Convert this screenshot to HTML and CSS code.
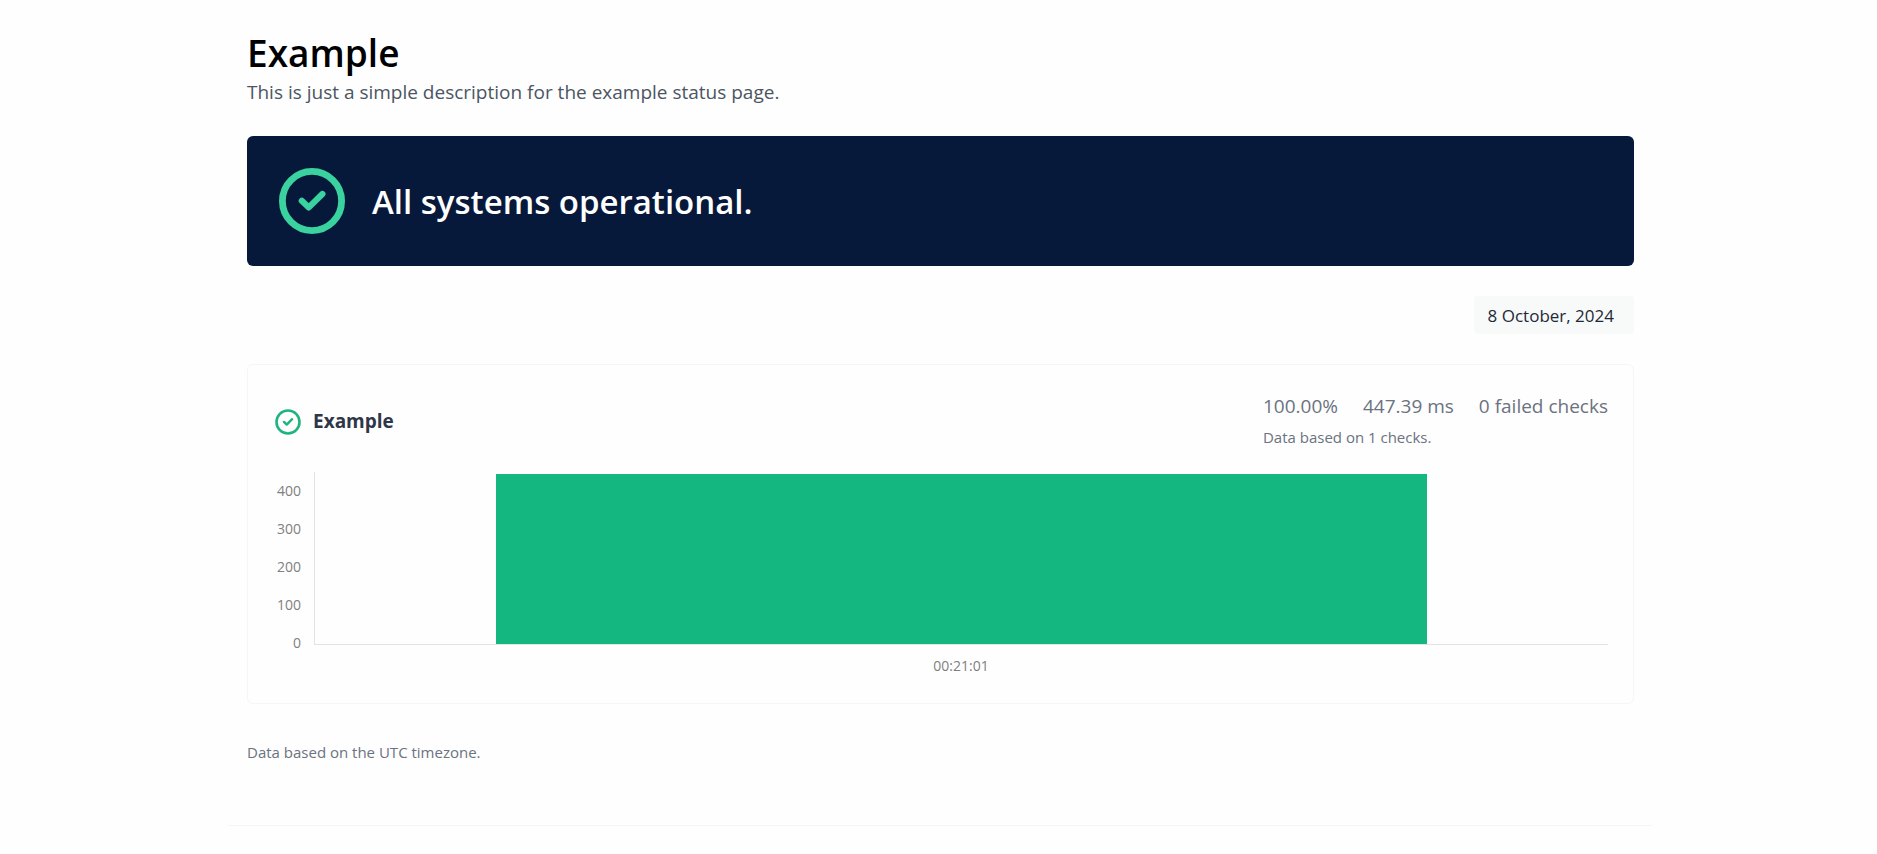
FILE: index.html
```
<!DOCTYPE html>
<html lang="en">
<head>
<meta charset="utf-8">
<meta name="viewport" content="width=device-width">
<title>Example</title>
<link rel="stylesheet" href="styles.css">
</head>
<body>

<main class="page">
	<header class="header">
		<h1>Example</h1>
		<p>This is just a simple description for the example status page.</p>
	</header>

	<section class="banner">
		<svg class="banner-icon" viewBox="0 0 66 66" aria-hidden="true">
			<circle cx="33" cy="33" r="29.6" stroke-width="6.8"/>
			<path d="M22.8 32.8l7 6.6L43.4 26" stroke-width="6.2"/>
		</svg>
		<h2>All systems operational.</h2>
	</section>

	<div class="toolbar">
		<button type="button" class="date">8 October, 2024</button>
	</div>

	<section class="card">
		<div class="card-head">
			<div class="monitor">
				<svg class="monitor-icon" viewBox="0 0 66 66" aria-hidden="true">
					<circle cx="33" cy="33" r="29.2" stroke-width="6.6"/>
					<path d="M22.8 32.8l7 6.6L43.4 26" stroke-width="6.2"/>
				</svg>
				<h3>Example</h3>
			</div>
			<div class="summary">
				<div class="stats">
					<span>100.00%</span>
					<span>447.39 ms</span>
					<span>0 failed checks</span>
				</div>
				<p class="note">Data based on 1 checks.</p>
			</div>
		</div>

		<div class="chart">
			<div class="y-axis">
				<span>400</span>
				<span>300</span>
				<span>200</span>
				<span>100</span>
				<span>0</span>
			</div>
			<div class="plot">
				<div class="bar"></div>
			</div>
			<div class="x-axis">00:21:01</div>
		</div>
	</section>

	<p class="note timezone">Data based on the UTC timezone.</p>
</main>

<footer class="footer"></footer>

</body>
</html>
```
FILE: styles.css
```
* {
	box-sizing: border-box;
}
body {
	margin: 0;
	padding: 0 225px 0 228px;
	background: #fefefe;
	color: #6b7280;
	font-family: "Open Sans", "Noto Sans", sans-serif;
}
h1, h2, h3, p {
	margin: 0;
}
.page {
	padding: 32px 18px 0 19px;
}
.header {
	margin-bottom: 26px;
}
.header h1 {
	color: #000;
	font-size: 37px;
	font-weight: 600;
	line-height: 42px;
}
.header p {
	color: #4b5563;
	font-size: 19px;
	line-height: 36px;
}
.banner {
	display: flex;
	align-items: center;
	gap: 27px;
	height: 130px;
	padding: 0 32px;
	border-radius: 6px;
	background: #07193b;
}
.banner-icon, .monitor-icon {
	flex: none;
	fill: none;
	stroke-linecap: round;
	stroke-linejoin: round;
}
.banner-icon {
	width: 66px;
	height: 66px;
	stroke: #3ad29f;
}
.banner h2 {
	padding-top: 2px;
	color: #fff;
	font-size: 33px;
	font-weight: 600;
	line-height: 44px;
}
.toolbar {
	display: flex;
	justify-content: flex-end;
	margin: 30px 0;
}
.date {
	height: 38px;
	padding: 0 20px 0 14px;
	border: 0;
	border-radius: 4px;
	background: #f8f9f9;
	color: #1f2937;
	font-family: inherit;
	font-size: 17px;
}
.card {
	padding: 24px 25px 25px 27px;
	border: 1px solid #f5f6f7;
	border-radius: 6px;
}
.card-head {
	display: flex;
	justify-content: space-between;
	align-items: center;
}
.monitor {
	display: flex;
	align-items: flex-end;
	gap: 12px;
	padding-top: 2px;
}
.monitor-icon {
	width: 26px;
	height: 26px;
	stroke: #1fb47f;
}
.monitor h3 {
	color: #2d3748;
	font-size: 19px;
	font-weight: 700;
	line-height: 28px;
}
.stats {
	display: flex;
	gap: 25px;
	font-size: 19px;
	line-height: 34px;
}
.note {
	font-size: 15px;
	line-height: 28px;
}
.chart {
	display: grid;
	grid-template-columns: 26px 1fr;
	grid-template-rows: 173px auto;
	column-gap: 13px;
	margin-top: 21px;
	color: #808080;
	font-size: 14px;
}
.y-axis {
	display: flex;
	flex-direction: column;
	justify-content: space-between;
	height: 181px;
	padding-top: 9px;
	text-align: right;
	line-height: 20px;
}
.plot {
	display: flex;
	justify-content: center;
	padding-top: 2px;
	border-left: 1px solid #e2e3e5;
	border-bottom: 1px solid #e2e3e5;
}
.bar {
	width: 72%;
	background: #13b77f;
}
.x-axis {
	grid-column: 2;
	padding-top: 9px;
	text-align: center;
	line-height: 24px;
}
.timezone {
	margin-top: 34px;
}
.footer {
	margin-top: 59px;
	border-top: 1px solid #f5f6f7;
}
@media (max-width: 1200px) {
	body {
		padding: 0 16px;
	}
}
```
